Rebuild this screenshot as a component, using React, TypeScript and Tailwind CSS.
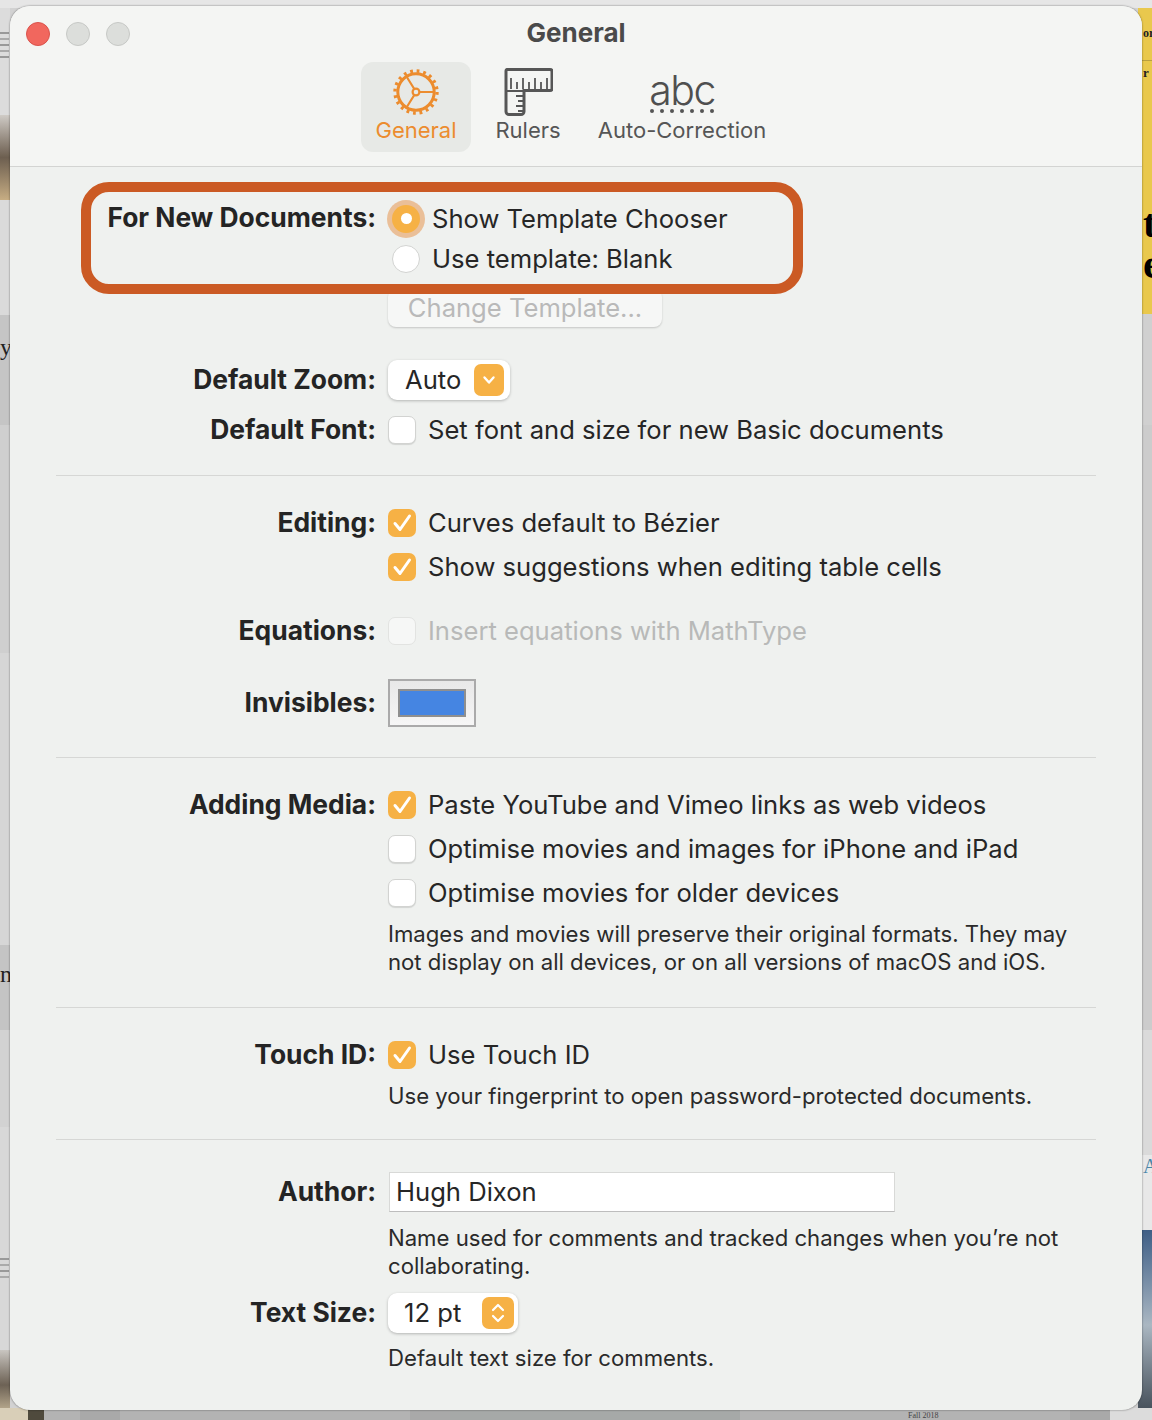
const font = "font-['Inter','Liberation_Sans',sans-serif]";

const Check = ({ on, disabled }: { on?: boolean; disabled?: boolean }) =>
  on ? (
    <span className="flex h-[28px] w-[28px] shrink-0 items-center justify-center rounded-[7px] bg-[#f6b145]">
      <svg width="24" height="24" viewBox="0 0 24 24" fill="none">
        <path d="M5 12.500l5 6L19.500 5" stroke="#fff" strokeWidth="3" strokeLinecap="round" strokeLinejoin="round" />
      </svg>
    </span>
  ) : (
    <span
      className={
        disabled
          ? 'h-[28px] w-[28px] shrink-0 rounded-[7px] border border-[#e2e3e1] bg-[#f6f7f6]'
          : 'h-[28px] w-[28px] shrink-0 rounded-[7px] border border-[#d2d3d1] bg-white shadow-[0_1px_1px_rgba(0,0,0,0.12)]'
      }
    />
  );

const Row = ({
  label,
  children,
  className = '',
  labelClass = ''
}: {
  label?: string;
  children: React.ReactNode;
  className?: string;
  labelClass?: string;
}) => (
  <div className={`flex items-center ${className}`}>
    <div className={`w-[366px] shrink-0 text-right text-[26.4px] font-bold text-[#242424] ${labelClass}`}>{label}</div>
    <div className="ml-[12px] flex items-center">{children}</div>
  </div>
);

const CheckRow = ({
  label,
  text,
  on,
  className = ''
}: {
  label?: string;
  text: string;
  on?: boolean;
  className?: string;
}) => (
  <Row label={label} className={`h-[44px] ${className}`}>
    <Check on={on} />
    <span className="ml-[12px] text-[25.6px] text-[#262626]">{text}</span>
  </Row>
);

const Note = ({ children, className = '' }: { children: React.ReactNode; className?: string }) => (
  <div className={`ml-[378px] text-[22.15px] leading-[28px] text-[#2a2a2a] ${className}`}>{children}</div>
);

const Divider = () => <div className="mx-[46px] h-px bg-[#d6d7d5]" />;

const GearIcon = () => (
  <svg width="46" height="46" viewBox="0 0 46 46" fill="none" stroke="#ec8c2e">
    <circle cx="23" cy="23" r="18.2" strokeWidth="3" />
    <circle cx="23" cy="23" r="21" strokeWidth="3.4" strokeDasharray="2.8 3.8" />
    <circle cx="23" cy="23" r="3.4" strokeWidth="2.2" />
    <path d="M26.4 23H41M21.3 20L13.5 7.5M21.3 26L13.5 38.5" strokeWidth="2.2" />
  </svg>
);

const RulerIcon = () => (
  <svg width="50" height="50" viewBox="0 0 50 50" fill="none" stroke="#565656">
    <path
      d="M4 2.500h43a2 2 0 0 1 2 2v17a2 2 0 0 1-2 2H21v21a3 3 0 0 1-3 3H6a3 3 0 0 1-3-3V4a1.500 1.500 0 0 1 1-1.500z"
      strokeWidth="3"
    />
    <path d="M3 24h18" strokeWidth="1.800" />
    <path
      d="M8 11v11M14 15v7M20 11v11M26 15v7M32 11v11M38 15v7M44 11v11M13 29h8M15 34h6M13 39h8M15 44h6"
      strokeWidth="1.800"
    />
  </svg>
);

const Tab = ({
  label,
  icon,
  active,
  className = ''
}: {
  label: string;
  icon: React.ReactNode;
  active?: boolean;
  className?: string;
}) => (
  <div
    className={`flex h-[90px] flex-col items-center rounded-[12px] ${active ? 'bg-[#e7e9e6] text-[#ec8c2e]' : 'text-[#565656]'} ${className}`}
  >
    <div className="flex h-[54px] items-center justify-center pt-[6px]">{icon}</div>
    <div className="text-[22px] leading-[28px]">{label}</div>
  </div>
);

const Backdrop = () => (
  <div className="absolute inset-0 overflow-hidden bg-[#d2d2d2]">
    <div className="absolute left-0 top-0 h-[8px] w-full bg-[#e6e6e6]" />
    {/* left edge */}
    <div className="absolute left-0 top-[8px] h-[107px] w-[10px] bg-[#dcdcdc]" />
    <div className="absolute left-0 top-[32px] flex w-[10px] flex-col gap-[4px]">
      <span className="h-[2px] w-[9px] bg-[#999]" />
      <span className="h-[2px] w-[9px] bg-[#aaa]" />
      <span className="h-[2px] w-[9px] bg-[#999]" />
      <span className="h-[2px] w-[9px] bg-[#aaa]" />
      <span className="h-[2px] w-[9px] bg-[#999]" />
    </div>
    <div className="absolute left-0 top-[115px] h-[85px] w-[10px] bg-gradient-to-b from-[#cfcbc6] via-[#6d5f50] to-[#c7ad83]" />
    <div className="absolute left-0 top-[200px] h-[115px] w-[10px] bg-[#dadada]" />
    <div className="absolute left-0 top-[315px] h-[110px] w-[10px] bg-[#c5c5c5]" />
    <div className="absolute left-0 top-[425px] h-[228px] w-[10px] bg-[#cfcfcf]" />
    <div className="absolute left-0 top-[653px] h-[292px] w-[10px] bg-[#d6d6d6]" />
    <div className="absolute left-0 top-[945px] h-[85px] w-[10px] bg-[#c4c4c4]" />
    <div className="absolute left-0 top-[1030px] h-[97px] w-[10px] bg-[#d2d2d2]" />
    <div className="absolute left-0 top-[1127px] h-[223px] w-[10px] bg-[#d8d8d8]" />
    <div className="absolute left-0 top-[1258px] flex w-[10px] flex-col gap-[4px]">
      <span className="h-[2px] w-[9px] bg-[#999]" />
      <span className="h-[2px] w-[9px] bg-[#aaa]" />
      <span className="h-[2px] w-[9px] bg-[#999]" />
      <span className="h-[2px] w-[9px] bg-[#aaa]" />
    </div>
    <div className="absolute bottom-0 left-0 h-[70px] w-[10px] bg-gradient-to-b from-[#c9c6c1] via-[#6d6255] to-[#d8c8a6]" />
    {/* right edge */}
    <div className="absolute right-0 top-[8px] h-[306px] w-[14px] bg-[#e9c84d]" />
    <div className="absolute right-0 top-[60px] h-px w-[10px] bg-[#b9a040]" />
    <div className="absolute right-0 top-[314px] h-[111px] w-[14px] bg-[#d0d0d0]" />
    <div className="absolute right-0 top-[425px] h-[605px] w-[14px] bg-[#cccccc]" />
    <div className="absolute right-0 top-[1030px] h-[125px] w-[14px] bg-[#dadada]" />
    <div className="absolute right-0 top-[1155px] h-[75px] w-[14px] bg-[#e8e8e8]" />
    <div className="absolute right-0 top-[1230px] h-[190px] w-[14px] bg-gradient-to-b from-[#3f5f86] via-[#aab7c2] to-[#3c4650]" />
    <div className="absolute left-[1143px] top-[1155px] font-['Liberation_Serif',serif] text-[20px] leading-[22px] text-[#4a86a8]">A</div>
    <div className="absolute left-[1143px] top-[26px] font-['Liberation_Serif',serif] text-[12px] font-bold leading-[14px] text-[#222]">or</div>
    <div className="absolute left-[1143px] top-[66px] font-['Liberation_Serif',serif] text-[13px] font-bold leading-[14px] text-[#222]">r</div>
    <div className="absolute left-[1143px] top-[204px] font-['Liberation_Serif',serif] text-[40px] font-bold leading-[40px] text-black">t</div>
    <div className="absolute left-[1143px] top-[246px] font-['Liberation_Serif',serif] text-[42px] font-bold leading-[36px] text-black">e</div>
    <div className="absolute left-0 top-[335px] font-['Liberation_Serif',serif] text-[24px] leading-[24px] text-[#222]">y</div>
    <div className="absolute left-0 top-[962px] font-['Liberation_Serif',serif] text-[24px] leading-[24px] text-[#222]">n</div>
    {/* bottom edge */}
    <div className="absolute bottom-0 left-0 flex h-[12px] w-full bg-[#b3b3b3]">
      <div className="h-full w-[28px] bg-[#d9cfb8]" />
      <div className="h-full w-[16px] bg-[#4f4a3d]" />
      <div className="ml-[36px] h-full w-[40px] bg-[#a9a9a9]" />
      <div className="ml-[290px] h-full w-[40px] bg-[#a9a9a9]" />
      <div className="h-full w-[290px] bg-[#a6a9a8]" />
      <div className="ml-[330px] h-full w-[40px] bg-[#a9a9a9]" />
      <div className="h-full flex-1 bg-[#dcdcdc]" />
    </div>
    <div className="absolute bottom-0 left-[908px] font-['Liberation_Serif',serif] text-[8px] leading-[9px] text-[#444]">Fall 2018</div>
  </div>
);

export default function App() {
  return (
    <div className={`relative h-[1420px] w-[1152px] overflow-hidden ${font}`}>
      <Backdrop />
      <div className="absolute bottom-[10px] left-[10px] right-[10px] top-[6px] overflow-hidden rounded-[20px] bg-[#eff1ef] shadow-[0_0_2px_rgba(0,0,0,0.55)]">
        {/* title bar */}
        <div className="relative h-[161px] border-b border-[#d3d4d2] bg-[#f4f5f3]">
          <div className="absolute left-[16px] top-[16px] flex gap-[16px]">
            <span className="h-[24px] w-[24px] rounded-full border border-[#d9534c] bg-[#f1675e]" />
            <span className="h-[24px] w-[24px] rounded-full border border-[#c6c8c5] bg-[#dcdedb]" />
            <span className="h-[24px] w-[24px] rounded-full border border-[#c6c8c5] bg-[#dcdedb]" />
          </div>
          <div className="pt-[11px] text-center text-[26px] font-bold leading-[32px] text-[#4a4a4a]">General</div>
          <div className="mt-[13px] flex pl-[351px]">
            <Tab label="General" icon={<GearIcon />} active className="w-[110px]" />
            <Tab label="Rulers" icon={<RulerIcon />} className="w-[114px]" />
            <Tab
              label="Auto-Correction"
              className="ml-[9px] w-[176px]"
              icon={
                <div className="flex flex-col items-center">
                  <span className="text-[41px] font-light leading-[36px] tracking-[-1.5px] text-[#4f4f4f]">abc</span>
                  <span className="mt-[1px] flex gap-[6px]">
                    {[0, 1, 2, 3, 4, 5, 6].map((i) => (
                      <span key={i} className="h-[4px] w-[4px] rounded-full bg-[#565656]" />
                    ))}
                  </span>
                </div>
              }
            />
          </div>
        </div>

        {/* body */}
        <div className="relative pt-[32px]">
          <div className="absolute left-[71px] top-[15px] z-10 h-[112px] w-[722px] rounded-[28px] border-[10px] border-[#cb5a24]" />
          <Row label="For New Documents:" className="h-[40px]" labelClass="pb-[2px]">
            <span className="ml-[4px] flex h-[28px] w-[28px] items-center justify-center rounded-full bg-[#f6b145] shadow-[0_0_0_5px_#eabf98]">
              <span className="h-[11px] w-[11px] rounded-full bg-white" />
            </span>
            <span className="ml-[12px] text-[25.6px] text-[#262626]">Show Template Chooser</span>
          </Row>
          <Row className="h-[40px]">
            <span className="ml-[4px] h-[28px] w-[28px] rounded-full border border-[#d2d3d1] bg-white" />
            <span className="ml-[12px] text-[25.6px] text-[#262626]">Use template: Blank</span>
          </Row>
          <Row className="mt-[10px] h-[38px]">
            <div className="flex h-[38px] w-[274px] items-center justify-center rounded-[8px] bg-[#f6f7f6] text-[25.6px] text-[#b9b9b9] shadow-[0_1px_2px_rgba(0,0,0,0.18)]">
              Change Template...
            </div>
          </Row>
          <Row label="Default Zoom:" className="mt-[33px] h-[40px]">
            <div className="flex h-[40px] w-[122px] items-center justify-between rounded-[9px] bg-white pl-[17px] pr-[6px] text-[25.6px] text-[#262626] shadow-[0_1px_3px_rgba(0,0,0,0.25)]">
              Auto
              <span className="flex h-[32px] w-[30px] items-center justify-center rounded-[7px] bg-[#f6b145]">
                <svg width="14" height="10" viewBox="0 0 14 10" fill="none">
                  <path d="M2.500 2.500L7 7.500l4.500-5" stroke="#fff" strokeWidth="2.400" strokeLinecap="round" strokeLinejoin="round" />
                </svg>
              </span>
            </div>
          </Row>
          <CheckRow label="Default Font:" text="Set font and size for new Basic documents" className="mt-[8px]" />
          <div className="pt-[23px]" />
          <Divider />

          <div className="pb-[23px] pt-[25px]">
            <CheckRow label="Editing:" text="Curves default to Bézier" on />
            <CheckRow text="Show suggestions when editing table cells" on />
            <Row label="Equations:" className="mt-[20px] h-[44px]">
              <Check disabled />
              <span className="ml-[12px] text-[25.6px] text-[#b8b9b8]">Insert equations with MathType</span>
            </Row>
            <Row label="Invisibles:" className="mt-[26px] h-[48px]">
              <div className="flex h-[48px] w-[88px] items-center justify-center border-2 border-[#aaaaaa] bg-gradient-to-b from-[#e8e8e8] to-[#f6f6f6]">
                <div className="h-[28px] w-[68px] border-2 border-[#8f8f8f] bg-[#4585e2]" />
              </div>
            </Row>
            <div className="pt-[7px]" />
          </div>
          <Divider />

          <div className="pb-[31px] pt-[25px]">
            <CheckRow label="Adding Media:" text="Paste YouTube and Vimeo links as web videos" on />
            <CheckRow text="Optimise movies and images for iPhone and iPad" />
            <CheckRow text="Optimise movies for older devices" />
            <Note className="mt-[5px]">
              Images and movies will preserve their original formats. They may
              <br />
              not display on all devices, or on all versions of macOS and iOS.
            </Note>
          </div>
          <Divider />

          <div className="pb-[29px] pt-[25px]">
            <CheckRow label="Touch ID:" text="Use Touch ID" on />
            <Note className="mt-[5px]">Use your fingerprint to open password-protected documents.</Note>
          </div>
          <Divider />

          <div className="pt-[31px]">
            <Row label="Author:" className="h-[42px]">
              <div className="ml-[1px] flex h-[40px] w-[506px] items-center border border-[#d8d9d7] border-b-[#bdbdbd] bg-white pl-[6px] text-[25.6px] text-[#262626]">
                Hugh Dixon
              </div>
            </Row>
            <Note className="mt-[11px]">
              Name used for comments and tracked changes when you’re not
              <br />
              collaborating.
            </Note>
            <Row label="Text Size:" className="mt-[13px] h-[40px]">
              <div className="flex h-[40px] w-[130px] items-center justify-between rounded-[9px] bg-white pl-[16px] pr-[4px] text-[25.6px] text-[#262626] shadow-[0_1px_3px_rgba(0,0,0,0.25)]">
                12 pt
                <span className="flex h-[32px] w-[32px] items-center justify-center rounded-[7px] bg-[#f6b145]">
                  <svg width="16" height="24" viewBox="0 0 16 24" fill="none">
                    <path d="M3 9l5-5 5 5M3 15l5 5 5-5" stroke="#fff" strokeWidth="2.200" strokeLinecap="round" strokeLinejoin="round" />
                  </svg>
                </span>
              </div>
            </Row>
            <Note className="mt-[11px]">Default text size for comments.</Note>
          </div>
        </div>
      </div>
    </div>
  );
}
